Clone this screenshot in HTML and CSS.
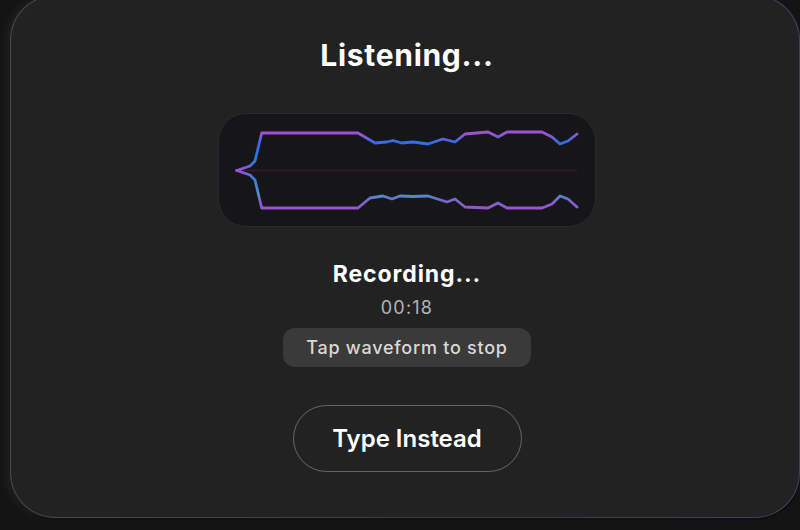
FILE: index.html
```html
<!DOCTYPE html>
<html lang="en">
<head>
<meta charset="utf-8">
<title>Listening</title>
<link rel="stylesheet" href="styles.css">
</head>
<body>
<div class="card">
  <h1 class="title">Listening...</h1>
  <div class="wave-panel">
    <svg class="wave" width="378" height="114" viewBox="218 113 378 114" xmlns="http://www.w3.org/2000/svg">
      <defs>
        <linearGradient id="wg" gradientUnits="userSpaceOnUse" x1="0" y1="130" x2="0" y2="211">
          <stop offset="0" stop-color="#a24fd2"/>
          <stop offset="0.06" stop-color="#9a52d4"/>
          <stop offset="0.12" stop-color="#4a6ce0"/>
          <stop offset="0.17" stop-color="#2a6fe8"/>
          <stop offset="0.38" stop-color="#2f78e0"/>
          <stop offset="0.5" stop-color="#a24fd2"/>
          <stop offset="0.6" stop-color="#3a7ce0"/>
          <stop offset="0.8" stop-color="#4d8fc6"/>
          <stop offset="0.88" stop-color="#7a62cc"/>
          <stop offset="1" stop-color="#a24fd2"/>
        </linearGradient>
      </defs>
      <line x1="237" y1="170.5" x2="577" y2="170.5" stroke="#2b2030" stroke-width="1.5"/>
      <path d="M236.7,170.5 L250,166 L255,161 L261.7,133 L358,133 L375,143 L386.7,142 L393,140.5 L401.7,143 L413,142 L428,144 L443,139 L455,142 L465,134 L488,132 L498,137 L507,132 L542,132 L552,137 L560,144 L568,141 L577,134" fill="none" stroke="url(#wg)" stroke-width="2.8" stroke-linejoin="round" stroke-linecap="round"/>
      <path d="M236.7,170.5 L250,175 L255,180 L261.7,208 L358,208 L370,198 L383,196 L392,199 L400,196 L413,196.5 L428,196 L447,202 L455,199 L465,207 L488,208 L498,203 L507,208 L542,208 L552,204 L560,196 L568,199 L577,207" fill="none" stroke="url(#wg)" stroke-width="2.8" stroke-linejoin="round" stroke-linecap="round"/>
    </svg>
  </div>
  <div class="status">Recording...</div>
  <div class="timer">00:18</div>
  <div class="hint">Tap waveform to stop</div>
  <button class="type-btn">Type Instead</button>
</div>
</body>
</html>
```

FILE: styles.css
```css
html, body {
  margin: 0;
  padding: 0;
  width: 800px;
  height: 530px;
  overflow: hidden;
  background: #141414;
  font-family: Inter, "Noto Sans", sans-serif;
}

.card {
  box-sizing: border-box;
  margin: -5px 0 0 10px;
  width: 790px;
  height: 523px;
  border-radius: 45px;
  border: 1.5px solid transparent;
  background:
    linear-gradient(#232223, #232223) padding-box,
    linear-gradient(90deg, #48484d 0%, #3a3a3e 60%, #4a3a68 100%) border-box;
  box-shadow: -6px 0 6px rgba(30, 30, 31, 0.9), 0 2px 0 #0c0c0c;
  display: flex;
  flex-direction: column;
  align-items: center;
  padding: 40.5px 0 0 4px;
  color: #ffffff;
}

.title {
  margin: 0;
  font-size: 30px;
  line-height: 36px;
  font-weight: 700;
  letter-spacing: 0.7px;
}

.wave-panel {
  box-sizing: border-box;
  margin-top: 40px;
  width: 378px;
  height: 114px;
  border-radius: 28px;
  background: #161618;
  border: 1px solid #2a2a2c;
  overflow: hidden;
  cursor: pointer;
}

.wave {
  display: block;
  margin: -1px;
}

.status {
  margin-top: 33px;
  font-size: 23px;
  line-height: 28px;
  font-weight: 700;
  letter-spacing: 0.9px;
}

.timer {
  margin-top: 9px;
  font-size: 18px;
  line-height: 22px;
  color: #b4b4b6;
  letter-spacing: 1.2px;
}

.hint {
  margin-top: 9px;
  height: 39px;
  box-sizing: border-box;
  padding: 0 23px;
  border-radius: 12px;
  background: #3a3a3b;
  color: #d8d8d8;
  font-size: 18px;
  font-weight: 500;
  letter-spacing: 0.75px;
  display: flex;
  align-items: center;
}

.type-btn {
  margin-top: 38px;
  width: 229px;
  height: 67px;
  border-radius: 34px;
  border: 1.5px solid #66666a;
  background: #232223;
  color: #ffffff;
  font-family: Inter, "Noto Sans", sans-serif;
  font-size: 24px;
  font-weight: 600;
  cursor: pointer;
}
```
